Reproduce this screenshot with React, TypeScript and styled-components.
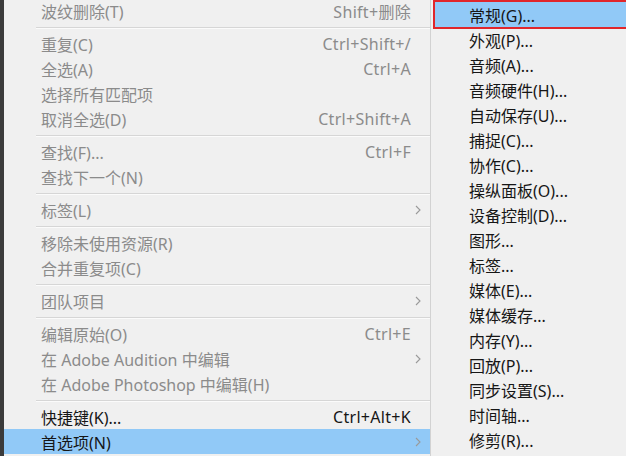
import React from 'react';
import styled, { createGlobalStyle } from 'styled-components';

const GlobalStyle = createGlobalStyle`
  html, body {
    margin: 0;
    padding: 0;
    background: #f0f0f0;
  }
  body {
    font-family: "Noto Sans", "Noto Sans CJK SC", sans-serif;
  }
`;

type Entry =
  | { kind: 'sep' }
  | { kind: 'item'; label: string; shortcut?: string; sub?: boolean; enabled?: boolean; active?: boolean };

const mainItems: Entry[] = [
  { kind: 'item', label: '波纹删除(T)', shortcut: 'Shift+删除' },
  { kind: 'sep' },
  { kind: 'item', label: '重复(C)', shortcut: 'Ctrl+Shift+/' },
  { kind: 'item', label: '全选(A)', shortcut: 'Ctrl+A' },
  { kind: 'item', label: '选择所有匹配项' },
  { kind: 'item', label: '取消全选(D)', shortcut: 'Ctrl+Shift+A' },
  { kind: 'sep' },
  { kind: 'item', label: '查找(F)...', shortcut: 'Ctrl+F' },
  { kind: 'item', label: '查找下一个(N)' },
  { kind: 'sep' },
  { kind: 'item', label: '标签(L)', sub: true },
  { kind: 'sep' },
  { kind: 'item', label: '移除未使用资源(R)' },
  { kind: 'item', label: '合并重复项(C)' },
  { kind: 'sep' },
  { kind: 'item', label: '团队项目', sub: true },
  { kind: 'sep' },
  { kind: 'item', label: '编辑原始(O)', shortcut: 'Ctrl+E' },
  { kind: 'item', label: '在 Adobe Audition 中编辑', sub: true },
  { kind: 'item', label: '在 Adobe Photoshop 中编辑(H)' },
  { kind: 'sep' },
  { kind: 'item', label: '快捷键(K)...', shortcut: 'Ctrl+Alt+K', enabled: true },
  { kind: 'item', label: '首选项(N)', sub: true, enabled: true, active: true },
];

const subItems = [
  '常规(G)...',
  '外观(P)...',
  '音频(A)...',
  '音频硬件(H)...',
  '自动保存(U)...',
  '捕捉(C)...',
  '协作(C)...',
  '操纵面板(O)...',
  '设备控制(D)...',
  '图形...',
  '标签...',
  '媒体(E)...',
  '媒体缓存...',
  '内存(Y)...',
  '回放(P)...',
  '同步设置(S)...',
  '时间轴...',
  '修剪(R)...',
];

const Screen = styled.div`
  display: flex;
  width: 626px;
  height: 456px;
  overflow: hidden;
  background: #f0f0f0;
`;

const DarkEdge = styled.div`
  flex: 0 0 4px;
  background: #3b3b3b;
`;

const Menu = styled.div`
  flex: 0 0 426px;
  display: flex;
  flex-direction: column;
  margin-top: -2px;
  background: #f0f0f0;
`;

const Row = styled.div<{ $enabled?: boolean; $active?: boolean }>`
  display: flex;
  align-items: center;
  height: 25px;
  flex: none;
  padding: 0 8px 0 37px;
  font-size: 16px;
  color: ${({ $enabled }) => ($enabled ? '#161616' : '#8b8b8b')};
  background: ${({ $active }) => ($active ? '#91c9f7' : 'transparent')};
  white-space: nowrap;
`;

const Label = styled.span`
  flex: 1;
`;

const Shortcut = styled.span`
  margin-right: 11px;
  letter-spacing: 0.3px;
`;

const Arrow = styled.span`
  display: flex;
  align-items: center;
  color: #9a9a9a;
  margin-right: 1px;
`;

const Separator = styled.div`
  flex: none;
  height: 8px;
  display: flex;
  align-items: center;
  padding-left: 32px;

  &::after {
    content: '';
    flex: 1;
    height: 1px;
    background: #d6d6d6;
    box-shadow: 0 1px 0 #fbfbfb;
  }
`;

const SubMenu = styled.div`
  flex: 1;
  display: flex;
  flex-direction: column;
  padding: 2px 0 0 4px;
  border-left: 1px solid #d2d2d2;
  background: #f0f0f0;
`;

const SubRow = styled.div<{ $active?: boolean }>`
  height: 25px;
  flex: none;
  display: flex;
  align-items: center;
  padding-left: 34px;
  font-size: 16px;
  color: #161616;
  white-space: nowrap;
  background: ${({ $active }) => ($active ? '#91c9f7' : 'transparent')};
  outline: ${({ $active }) => ($active ? '2px solid #e0262b' : 'none')};
  outline-offset: 0;
  margin-right: -4px;
`;

const Chevron = () => (
  <svg width="6" height="10" viewBox="0 0 6 10">
    <path d="M1 1l4 4-4 4" fill="none" stroke="currentColor" strokeWidth="1.1" />
  </svg>
);

const App = () => (
  <>
    <GlobalStyle />
    <Screen>
      <DarkEdge />
      <Menu>
        {mainItems.map((entry, i) =>
          entry.kind === 'sep' ? (
            <Separator key={i} />
          ) : (
            <Row key={i} $enabled={entry.enabled} $active={entry.active}>
              <Label>{entry.label}</Label>
              {entry.shortcut && <Shortcut>{entry.shortcut}</Shortcut>}
              {entry.sub && (
                <Arrow>
                  <Chevron />
                </Arrow>
              )}
            </Row>
          )
        )}
      </Menu>
      <SubMenu>
        {subItems.map((label, i) => (
          <SubRow key={label + i} $active={i === 0}>
            {label}
          </SubRow>
        ))}
      </SubMenu>
    </Screen>
  </>
);

export default App;
